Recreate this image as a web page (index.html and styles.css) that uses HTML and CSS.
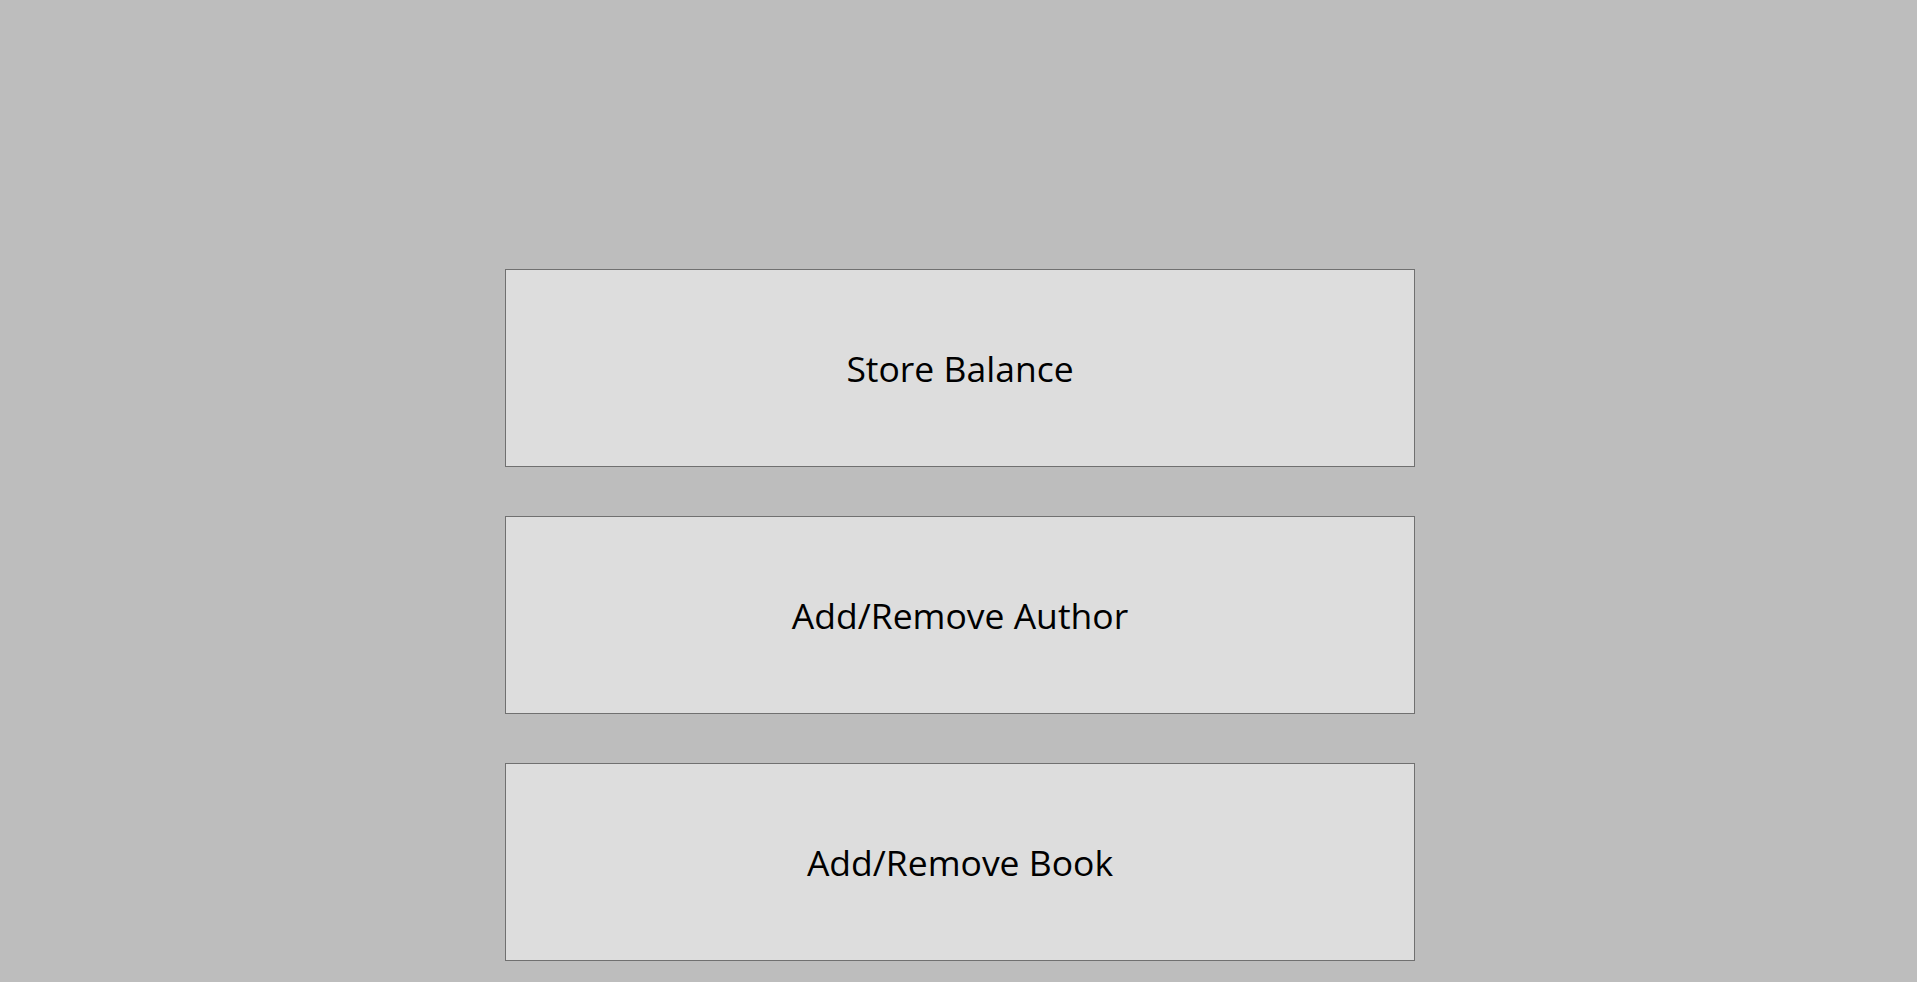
FILE: index.html
```html
<!DOCTYPE html>
<html>
<head>
<meta charset="utf-8">
<link rel="stylesheet" href="styles.css">
</head>
<body>
<main class="menu">
  <button class="menu-btn">Store Balance</button>
  <button class="menu-btn">Add/Remove Author</button>
  <button class="menu-btn">Add/Remove Book</button>
</main>
</body>
</html>
```
FILE: styles.css
```css
html, body {
  margin: 0;
  padding: 0;
  height: 100%;
  background: #bdbdbd;
  overflow: hidden;
}
.menu {
  display: flex;
  flex-direction: column;
  align-items: flex-start;
  gap: 49px;
  padding-top: 269px;
  padding-left: 505px;
}
.menu-btn {
  box-sizing: border-box;
  width: 910px;
  height: 198px;
  margin: 0;
  padding: 0;
  background: #dddddd;
  border: 1px solid #707070;
  font-family: "Open Sans", "Noto Sans", sans-serif;
  font-size: 35.5px;
  color: #000;
  text-align: center;
}
```
